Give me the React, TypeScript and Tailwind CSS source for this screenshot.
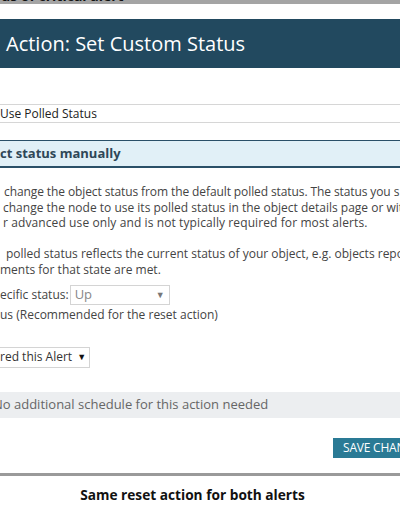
import React from 'react';

const font = { fontFamily: '"Open Sans", "Liberation Sans", sans-serif' };

const App: React.FC = () => {
  return (
    <div className="w-[400px] h-[512px] overflow-hidden bg-white whitespace-nowrap text-[#333]" style={font}>
      {/* top cut-off caption strip */}
      <div className="h-[4px] overflow-hidden bg-[#a4a4a4]">
        <div className="mt-[-12px] text-[14px] leading-[16px] font-bold text-[#111] pl-[1px]">us of critical alert</div>
      </div>

      <div className="h-[15px]" />

      {/* dialog header */}
      <div className="h-[49px] bg-[#22495f] flex items-center pl-[6px]">
        <h1 className="text-[20px] text-white">Action: Set Custom Status</h1>
      </div>

      <div className="h-[36px]" />

      {/* name input */}
      <div className="h-[19px] border-y border-[#d6d6d6] flex items-center text-[12px] text-[#222]">
        Use Polled Status
      </div>

      <div className="h-[17px]" />

      {/* section header */}
      <div className="h-[28px] bg-[#e1f0f7] border-t border-b-2 border-[#2a5068] flex items-center">
        <span className="text-[13px] font-bold text-[#2e4757]">ct status manually</span>
      </div>

      {/* description */}
      <div className="pt-[16px] text-[12px] leading-[15.5px] text-[#444]">
        <div className="pl-[4px] tracking-[-0.1px]">change the object status from the default polled status. The status you s</div>
        <div className="pl-[3px]">change the node to use its polled status in the object details page or with</div>
        <div className="pl-[3px] tracking-[0.1px]">r advanced use only and is not typically required for most alerts.</div>
        <div className="h-[15.5px]" />
        <div className="pl-[6px]">polled status reflects the current status of your object, e.g. objects repo</div>
        <div>ments for that state are met.</div>
      </div>

      {/* status options */}
      <div className="mt-[8px] text-[12px] text-[#444]">
        <div className="flex items-center h-[20px]">
          <span>ecific status:</span>
          <div className="ml-[1px] w-[100px] h-[20px] border border-[#d4d4d4] flex items-center justify-between px-[4px]">
            <span className="text-[13px] text-[#888]">Up</span>
            <span className="text-[9px] text-[#777]">▼</span>
          </div>
        </div>
        <div className="h-[15.5px] leading-[15.5px] mt-[2px]">us (Recommended for the reset action)</div>
      </div>

      {/* execution select */}
      <div className="mt-[24px] w-[90px] h-[21px] border border-[#d4d4d4] border-l-0 flex items-center text-[12px] text-[#333]">
        <span>red this Alert</span>
        <span className="ml-[5px] text-[9px] text-[#111]">▼</span>
      </div>

      <div className="h-[24px]" />

      {/* schedule bar */}
      <div className="h-[26px] bg-[#eceef0] flex items-center overflow-hidden">
        <span className="ml-[-7px] text-[13px] text-[#666]">No additional schedule for this action needed</span>
      </div>

      <div className="h-[20px]" />

      <div className="flex justify-end">
        <button className="w-[67px] h-[20px] bg-[#2a7a95] text-white text-[12px] tracking-[-0.2px] pl-[10px] text-left overflow-hidden whitespace-nowrap">
          SAVE CHANGES
        </button>
      </div>

      <div className="h-[15px]" />

      <div className="h-[3px] bg-[#9a9a9a]" />

      <div className="pt-[6px] text-center pr-[15px]">
        <span className="text-[13.7px] font-bold text-[#111]">Same reset action for both alerts</span>
      </div>
    </div>
  );
};

export default App;
